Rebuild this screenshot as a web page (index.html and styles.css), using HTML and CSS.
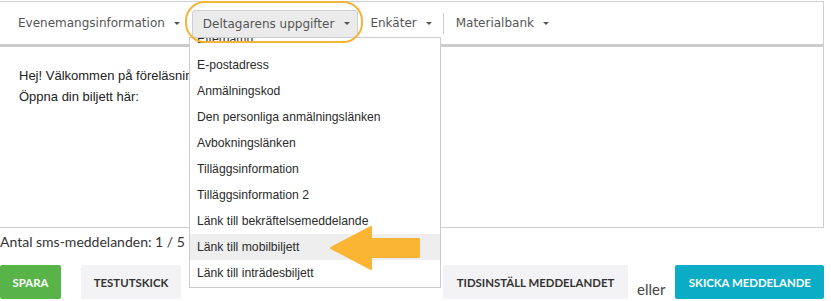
FILE: index.html
```html
<!DOCTYPE html>
<html lang="sv">
<head>
<meta charset="utf-8">
<link rel="stylesheet" href="styles.css">
</head>
<body>
<div class="page">
  <div class="editor">
    <div class="toolbar">
      <div class="tb-item">Evenemangsinformation<span class="caret"></span></div>
      <div class="tb-item active">Deltagarens uppgifter<span class="caret"></span></div>
      <div class="tb-item">Enkäter<span class="caret"></span></div>
      <div class="tb-sep"></div>
      <div class="tb-item">Materialbank<span class="caret"></span></div>
    </div>
    <div class="content">
      <p>Hej! Välkommen på föreläsningen om hållbarhet.</p>
      <p>Öppna din biljett här:</p>
    </div>
  </div>
  <div class="count">Antal sms-meddelanden: 1 / 5</div>
  <div class="actions">
    <button class="btn btn-green">SPARA</button>
    <button class="btn btn-gray btn-test">TESTUTSKICK</button>
    <span class="spacer"></span>
    <button class="btn btn-gray btn-sched">TIDSINSTÄLL MEDDELANDET</button>
    <span class="or">eller</span>
    <button class="btn btn-cyan">SKICKA MEDDELANDE</button>
  </div>

  <div class="menu">
    <ul class="menu-list">
      <li>Efternamn</li>
      <li>E-postadress</li>
      <li>Anmälningskod</li>
      <li>Den personliga anmälningslänken</li>
      <li>Avbokningslänken</li>
      <li>Tilläggsinformation</li>
      <li>Tilläggsinformation 2</li>
      <li>Länk till bekräftelsemeddelande</li>
      <li class="hover">Länk till mobilbiljett</li>
      <li>Länk till inträdesbiljett</li>
    </ul>
  </div>

  <div class="ring"></div>
  <svg class="arrow" width="100" height="50" viewBox="0 0 100 50">
    <polygon points="2,22 42,1 42,13 90,13 90,31 42,31 42,43" fill="#fbb535" stroke="#fbb535" stroke-width="2" stroke-linejoin="round"/>
  </svg>
</div>
</body>
</html>
```
FILE: styles.css
```css
* { box-sizing: border-box; }
html, body { margin: 0; padding: 0; background: #fff; }
body { width: 831px; height: 301px; overflow: hidden; }
.page { position: relative; width: 831px; height: 301px; }

.editor {
  margin-left: -1px;
  width: 825px;
  height: 227px;
  margin-top: 1px;
  border: 1px solid #cfcfcf;
  display: flex;
  flex-direction: column;
}
.toolbar {
  height: 45px;
  border-bottom: 3px solid #cccccc;
  display: flex;
  align-items: center;
  padding-left: 7px;
  font-family: "DejaVu Sans", Verdana, sans-serif;
  font-size: 12px;
  color: #555;
}
.tb-item {
  display: flex;
  align-items: center;
  height: 28px;
  padding: 0 10px;
  white-space: nowrap;
  border: 1px solid transparent;
  border-radius: 3px;
}
.tb-item.active {
  background: #ebebeb;
  border-color: #cfcfcf;
  padding-right: 7px;
  margin-left: 1px;
  margin-right: 1px;
  margin-top: 1px;
}
.caret {
  display: inline-block;
  margin-left: 9px;
  width: 0; height: 0;
  border-left: 3px solid transparent;
  border-right: 3px solid transparent;
  border-top: 3px solid #555;
}
.tb-item.active .caret { margin-left: 10px; }
.tb-sep {
  width: 1px;
  height: 21px;
  background: #ccc;
  margin: 0 1px 0 0;
}
.content {
  flex: 1;
  padding: 21px 19px;
  font-family: "Liberation Sans", Arial, sans-serif;
  font-size: 13px;
  color: #222;
}
.content p {
  margin: 0 0 6px;
  line-height: 15px;
  width: 170px;
  white-space: nowrap;
  overflow: hidden;
}

.count {
  margin-top: 5px;
  font-family: Lato, "Open Sans", sans-serif;
  font-size: 14px;
  color: #333;
  line-height: 18px;
}
.actions {
  display: flex;
  align-items: flex-end;
  margin-top: 14px;
}
.btn {
  height: 34px;
  border: none;
  border-radius: 2px;
  font-family: Lato, sans-serif;
  font-weight: 700;
  font-size: 11.4px;
  padding: 0;
  white-space: nowrap;
  text-align: center;
}
.btn-green { background: #58b348; color: #fff; width: 61px; }
.btn-gray { background: #f3f3f5; color: #333; }
.btn-test { margin-left: 20px; width: 100px; }
.spacer { width: 262px; }
.btn-sched { width: 185px; }
.or {
  font-family: Lato, sans-serif;
  font-size: 15px;
  color: #444;
  margin: 0 10px 0 9px;
  line-height: 20px;
}
.btn-cyan { background: #0bacc5; color: #fff; width: 149px; }

.menu {
  position: absolute;
  left: 189px;
  top: 36px;
  width: 252px;
  height: 251px;
  background: #fff;
  border: 1px solid #cccccc;
  overflow: hidden;
}
.menu-list {
  list-style: none;
  margin: -12px 0 0;
  padding: 0;
  font-family: "Liberation Sans", Arial, sans-serif;
  font-size: 12.2px;
  color: #2b2b2b;
}
.menu-list li {
  height: 26px;
  line-height: 26px;
  padding-left: 7px;
  white-space: nowrap;
}
.menu-list li.hover { background: #eeeeee; }

.ring {
  position: absolute;
  left: 185px;
  top: 0px;
  width: 178px;
  height: 42px;
  border: 2.5px solid #f6b33a;
  border-radius: 20px;
}
.arrow {
  position: absolute;
  left: 329px;
  top: 225px;
}
```
